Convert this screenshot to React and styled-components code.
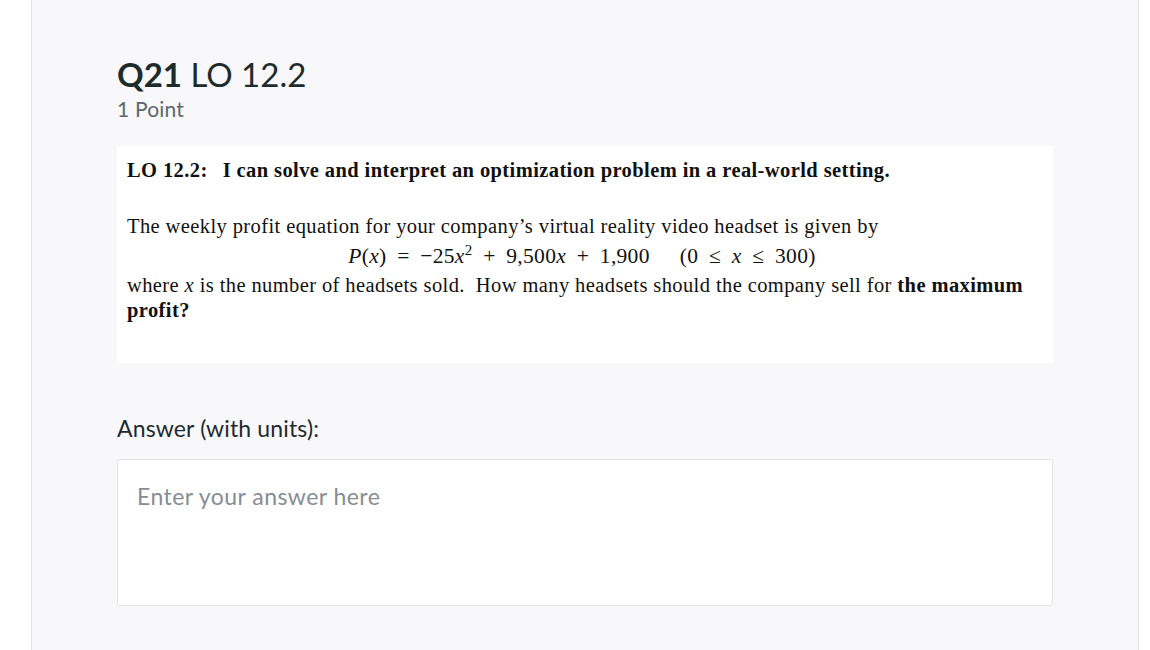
import React from 'react';
import styled, { createGlobalStyle } from 'styled-components';

const GlobalStyle = createGlobalStyle`
  html, body {
    margin: 0;
    padding: 0;
    background: #ffffff;
    overflow: hidden;
  }
`;

// Page shell
const Page = styled.div`
  height: 650px;
  padding-left: 31px;
  box-sizing: border-box;
`;

const Panel = styled.section`
  width: 1108px;
  height: 650px;
  box-sizing: border-box;
  background: #f8f8fa;
  border-left: 1px solid #e2e2e7;
  border-right: 1px solid #e2e2e7;
  padding: 54px 85px 0 85px;
  font-family: Lato, "Open Sans", sans-serif;
  color: #1f2a30;
`;

const Title = styled.h1`
  margin: 0;
  font-size: 33px;
  line-height: 40px;
  font-weight: 400;
  color: #1d2b2c;

  strong {
    font-weight: 700;
  }
`;

const Points = styled.div`
  font-size: 21px;
  line-height: 26px;
  color: #5b6770;
  margin-top: 2px;
  letter-spacing: 0.2px;
`;

// The question is a pasted picture of a printed page
const QuestionSheet = styled.div`
  margin-top: 24px;
  width: 936px;
  height: 217px;
  box-sizing: border-box;
  background: #ffffff;
  padding: 12px 10px 0 10px;
  font-family: "Liberation Serif", "Times New Roman", serif;
  font-size: 20.5px;
  letter-spacing: 0.4px;
  line-height: 25px;
  color: #111;
  white-space: nowrap;
`;

const Objective = styled.p`
  margin: 0;
  font-weight: 700;
`;

const Gap = styled.span`
  display: inline-block;
  width: ${(p) => p.w}px;
`;

const Body = styled.p`
  margin: 31px 0 0;
`;

const Equation = styled.span`
  display: block;
  line-height: 34px;
  text-align: center;
  padding-right: 6px;
  letter-spacing: 0.3px;
  font-size: 21.5px;

  i {
    font-style: italic;
  }
`;

const Op = styled.span`
  margin: 0 5px;
`;

const Sup = styled.sup`
  font-size: 15px;
  line-height: 0;
`;

const AnswerLabel = styled.label`
  display: block;
  margin-top: 51px;
  font-size: 23px;
  letter-spacing: 0.15px;
  line-height: 28px;
  color: #1f2a30;
`;

const AnswerBox = styled.textarea`
  display: block;
  margin-top: 17px;
  width: 936px;
  height: 147px;
  box-sizing: border-box;
  border: 1px solid #e1e1e6;
  border-radius: 3px;
  background: #fff;
  resize: none;
  padding: 22px 19px;
  font-family: Lato, "Open Sans", sans-serif;
  font-size: 23px;
  letter-spacing: 0.45px;
  line-height: 28px;
  color: #1f2a30;
  outline: none;

  &::placeholder {
    color: #868d94;
  }
`;

export default function App() {
  return (
    <>
      <GlobalStyle />
      <Page>
        <Panel>
          <Title>
            <strong>Q21</strong> LO 12.2
          </Title>
          <Points>1 Point</Points>

          <QuestionSheet>
            <Objective>
              LO 12.2:<Gap w={15} />I can solve and interpret an optimization problem in a real-world setting.
            </Objective>
            <Body>
              The weekly profit equation for your company’s virtual reality video headset is given by
              <Equation>
                <i>P</i>(<i>x</i>) <Op>=</Op> −25<i>x</i><Sup>2</Sup> <Op>+</Op> 9,500<i>x</i> <Op>+</Op> 1,900
                <Gap w={30} />(0 <Op>≤</Op> <i>x</i> <Op>≤</Op> 300)
              </Equation>
              where <i>x</i> is the number of headsets sold.&nbsp; How many headsets should the company sell for <b>the maximum</b>
              <br />
              <b>profit?</b>
            </Body>
          </QuestionSheet>

          <AnswerLabel htmlFor="answer">Answer (with units):</AnswerLabel>
          <AnswerBox id="answer" placeholder="Enter your answer here" />
        </Panel>
      </Page>
    </>
  );
}
